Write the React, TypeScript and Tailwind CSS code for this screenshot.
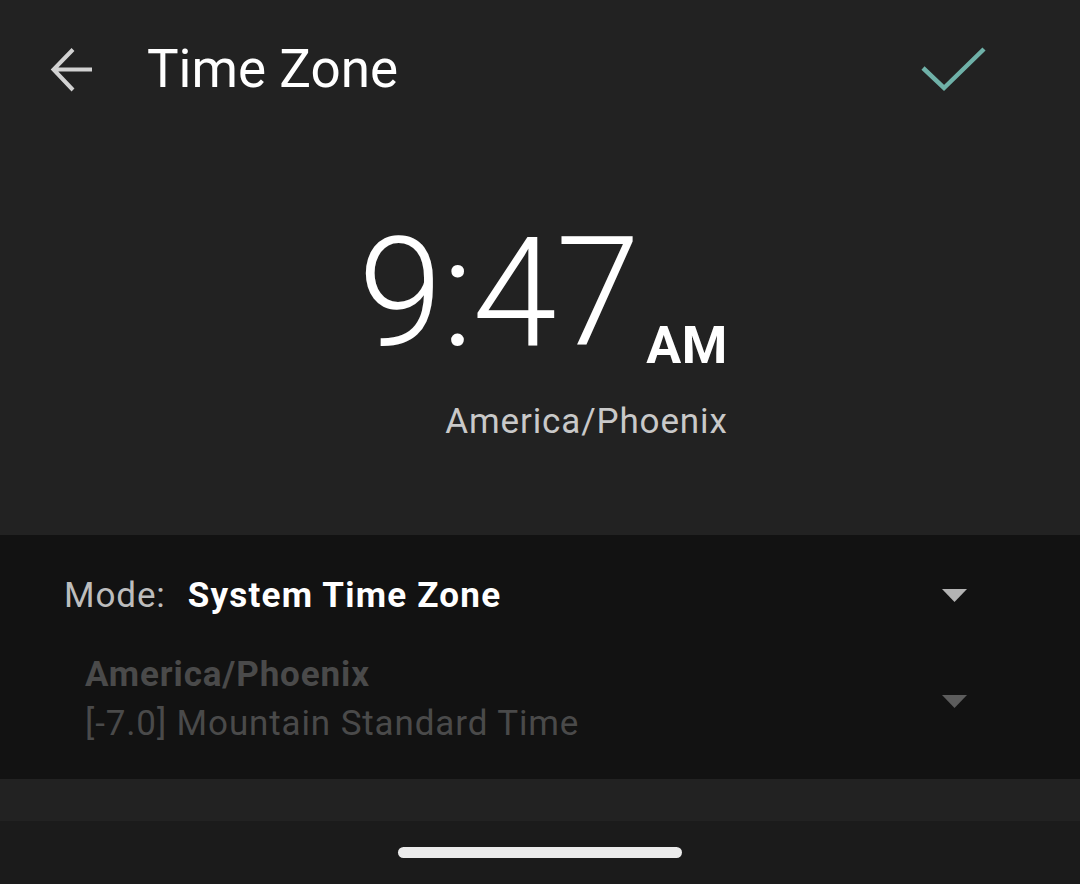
const font = { fontFamily: "Roboto, 'Noto Sans', sans-serif" }

function BackArrow() {
  return (
    <svg width="48" height="48" viewBox="0 0 48 48" fill="none" className="shrink-0">
      <path d="M25 3.5 L5.5 23.5 L25 44 M5.5 23.5 H44" stroke="#d2d2d2" strokeWidth="4" />
    </svg>
  )
}

function Check() {
  return (
    <svg width="70" height="50" viewBox="0 0 70 50" fill="none" className="shrink-0">
      <path d="M4 23 L25 43 L65 4" stroke="#6fb1a8" strokeWidth="4.5" />
    </svg>
  )
}

function Caret({ color }: { color: string }) {
  return (
    <svg width="25" height="13" viewBox="0 0 25 13" className="shrink-0">
      <path d="M0 0 H25 L12.5 13 Z" fill={color} />
    </svg>
  )
}

export default function App() {
  return (
    <div className="w-[1080px] h-[884px] flex flex-col bg-[#222222] overflow-hidden" style={font}>
      <header className="h-[139px] flex items-center shrink-0">
        <div className="ml-[48px]">
          <BackArrow />
        </div>
        <h1 className="ml-[51px] text-[53px] leading-none text-white font-normal">Time Zone</h1>
        <div className="flex-1" />
        <div className="mr-[91px]">
          <Check />
        </div>
      </header>

      <section className="h-[396px] shrink-0 flex justify-center pt-[78px]">
        <div className="flex flex-col items-end ml-[6px]">
          <div className="flex items-end">
            <span className="text-[152px] leading-none font-light text-white tracking-[-1px]">9:47</span>
            <span className="text-[52px] leading-none font-bold text-white ml-[7px] mb-[-3px] tracking-[0.5px]">AM</span>
          </div>
          <span className="mt-[35px] text-[35px] leading-none text-[#c9c9c9] tracking-[0.025em]">America/Phoenix</span>
        </div>
      </section>

      <section className="h-[244px] shrink-0 bg-[#121212] pt-[43px]">
        <div className="flex items-center pl-[64px] pr-[113px]">
          <span className="text-[35px] leading-none text-[#bdbdbd] tracking-[0.025em]">Mode:</span>
          <span className="ml-[22px] text-[35px] leading-none font-bold text-white tracking-[0.035em]">System Time Zone</span>
          <div className="flex-1" />
          <Caret color="#b3b3b3" />
        </div>
        <div className="flex items-center pl-[85px] pr-[113px] mt-[44px]">
          <div className="flex flex-col">
            <span className="text-[35px] leading-none font-bold text-[#4a4a4a] tracking-[0.025em]">America/Phoenix</span>
            <span className="mt-[14px] text-[35px] leading-none text-[#4a4a4a] tracking-[0.025em]">[-7.0] Mountain Standard Time</span>
          </div>
          <div className="flex-1" />
          <div className="mt-[4px]">
            <Caret color="#5c5c5c" />
          </div>
        </div>
      </section>

      <div className="h-[42px] shrink-0 bg-[#222222]" />

      <nav className="flex-1 bg-[#1b1b1b] flex justify-center pt-[26px]">
        <div className="w-[284px] h-[11px] rounded-full bg-[#ebebeb]" />
      </nav>
    </div>
  )
}
